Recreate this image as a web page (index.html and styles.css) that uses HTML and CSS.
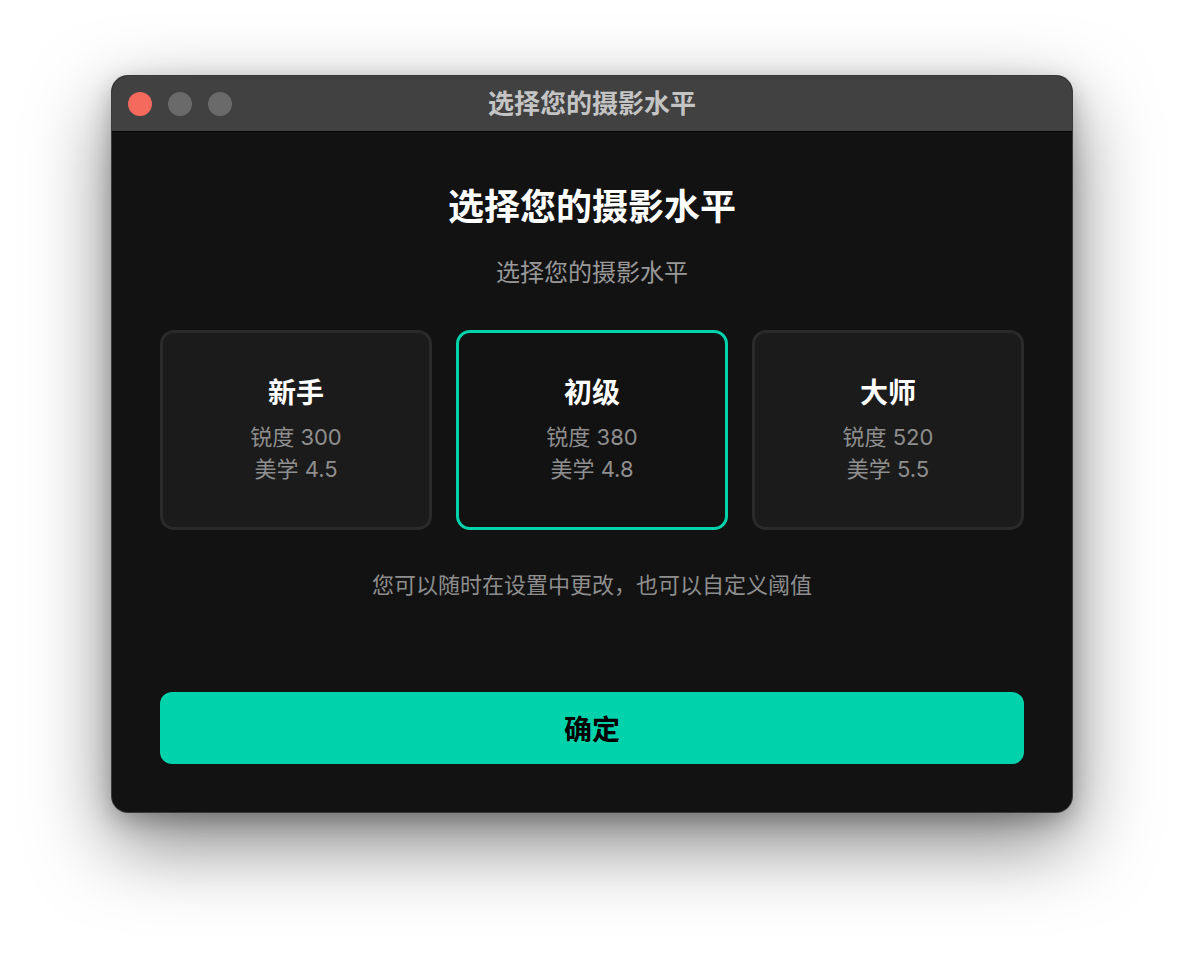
FILE: index.html
```html
<!DOCTYPE html>
<html lang="zh-CN">
<head>
  <meta charset="UTF-8">
  <meta name="viewport" content="width=device-width, initial-scale=1.0">
  <title>选择您的摄影水平</title>
  <link rel="stylesheet" href="styles.css">
</head>
<body>
  <div class="stage">
    <!-- Window -->
    <div class="window">
      <div class="titlebar">
        <div class="lights">
          <span class="light red"></span>
          <span class="light"></span>
          <span class="light"></span>
        </div>
        <div class="window-title">选择您的摄影水平</div>
        <div></div>
      </div>

      <div class="content">
        <h1>选择您的摄影水平</h1>
        <p class="subtitle">选择您的摄影水平</p>

        <div class="levels">
          <div class="level">
            <div class="level-name">新手</div>
            <div class="level-stat">锐度 300</div>
            <div class="level-stat">美学 4.5</div>
          </div>
          <div class="level selected">
            <div class="level-name">初级</div>
            <div class="level-stat">锐度 380</div>
            <div class="level-stat">美学 4.8</div>
          </div>
          <div class="level">
            <div class="level-name">大师</div>
            <div class="level-stat">锐度 520</div>
            <div class="level-stat">美学 5.5</div>
          </div>
        </div>

        <p class="note">您可以随时在设置中更改，也可以自定义阈值</p>

        <button class="confirm-btn">确定</button>
      </div>
    </div>
  </div>
</body>
</html>
```

FILE: styles.css
```css
/* Global Styles */
body {
  margin: 0;
  background-color: #ffffff;
  font-family: Inter, "Noto Sans CJK SC", sans-serif;
}

.stage {
  min-height: 100vh;
  box-sizing: border-box;
  padding-top: 76px;
  display: flex;
  justify-content: center;
  align-items: flex-start;
}

/* Window */
.window {
  width: 960px;
  background-color: #121212;
  border-radius: 16px;
  overflow: hidden;
  box-shadow: 0 0 0 1px #3a3a3a, 0 30px 80px rgba(0, 0, 0, 0.5), 0 8px 24px rgba(0, 0, 0, 0.25);
}

.titlebar {
  height: 55px;
  background-color: #414141;
  border-bottom: 1px solid #050505;
  display: grid;
  grid-template-columns: 1fr auto 1fr;
  align-items: center;
}

.lights {
  display: flex;
  gap: 16px;
  padding-left: 16px;
}

.light {
  width: 24px;
  height: 24px;
  border-radius: 50%;
  background-color: #6a6a6a;
}

.light.red {
  background-color: #f46b5d;
}

.window-title {
  color: #c4c4c4;
  font-size: 26px;
  font-weight: bold;
  line-height: 32px;
}

/* Content */
.content {
  padding: 51px 48px 48px;
  text-align: center;
}

h1 {
  margin: 0;
  font-size: 36px;
  line-height: 48px;
  color: #ffffff;
  font-weight: bold;
}

.subtitle {
  margin: 26px 0 0;
  font-size: 24px;
  line-height: 32px;
  color: #999999;
}

.levels {
  margin-top: 41px;
  display: grid;
  grid-template-columns: repeat(3, 1fr);
  gap: 24px;
}

.level {
  height: 200px;
  box-sizing: border-box;
  border: 3px solid #2a2a2a;
  border-radius: 14px;
  background-color: #1b1b1b;
  display: flex;
  flex-direction: column;
  justify-content: center;
  align-items: center;
}

.level.selected {
  border-color: #00d3ab;
  background-color: #121212;
}

.level-name {
  font-size: 28px;
  line-height: 36px;
  font-weight: bold;
  color: #ffffff;
  margin-bottom: 10px;
}

.level-stat {
  font-size: 22px;
  line-height: 32px;
  color: #8e8e8e;
}

.note {
  margin: 39px 0 0;
  font-size: 22px;
  line-height: 32px;
  color: #8e8e8e;
}

.confirm-btn {
  display: block;
  width: 100%;
  height: 72px;
  margin-top: 91px;
  border: none;
  border-radius: 12px;
  background-color: #00d3ab;
  color: #000000;
  font-family: inherit;
  font-size: 28px;
  font-weight: bold;
  cursor: pointer;
}
```
